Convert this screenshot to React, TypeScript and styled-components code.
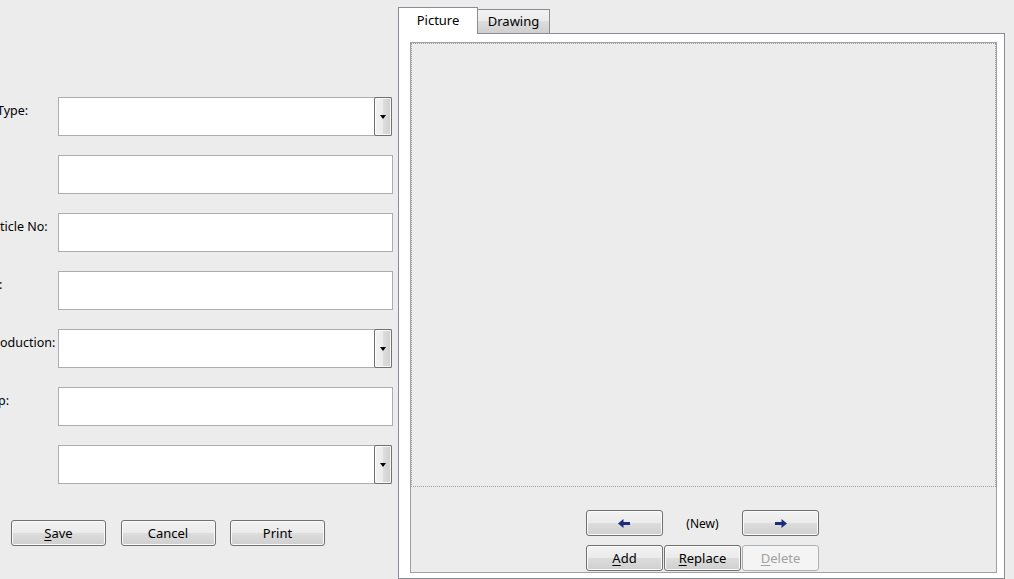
import React from 'react';
import styled, {createGlobalStyle} from 'styled-components';

const GlobalStyle = createGlobalStyle`
  html, body {
    margin: 0;
    padding: 0;
    background: #ececec;
  }
  body {
    font-family: "Noto Sans", "Open Sans", sans-serif;
    font-size: 13px;
    color: #000;
  }
`

type Field = {label?: string; indent?: number; combo?: boolean};

const fields: Field[] = [
    {label: 'Type:', indent: -3, combo: true},
    {},
    {label: 'ticle No:'},
    {label: ':', indent: -1},
    {label: 'oduction:', combo: true},
    {label: 'p:', indent: -2},
    {combo: true},
];

const LeftArrow = () => (
    <svg width="13" height="9" viewBox="0 0 13 9">
        <path d="M0 4.5 L5.5 0 V3 H12 V6 H5.5 V9 Z" fill="#1c2c7c"/>
    </svg>
);

const RightArrow = () => (
    <svg width="13" height="9" viewBox="0 0 13 9">
        <path d="M13 4.5 L7.5 0 V3 H1 V6 H7.5 V9 Z" fill="#1c2c7c"/>
    </svg>
);

const App = () => {
    return (
        <>
            <GlobalStyle/>
            <Window>
                <FormPane>
                    <Fields>
                        {fields.map((f, i) => (
                            <Row key={i}>
                                <Label $indent={f.indent ?? 0}>{f.label}</Label>
                                {f.combo ? (
                                    <Combo>
                                        <ComboText/>
                                        <DropButton>
                                            <DropArrow/>
                                        </DropButton>
                                    </Combo>
                                ) : (
                                    <TextBox/>
                                )}
                            </Row>
                        ))}
                    </Fields>
                    <ButtonRow>
                        <Button $width={95}><u>S</u>ave</Button>
                        <Button $width={95}>Cancel</Button>
                        <Button $width={95}>Print</Button>
                    </ButtonRow>
                </FormPane>

                <TabPane>
                    <TabStrip>
                        <Tab $active>Picture</Tab>
                        <Tab>Drawing</Tab>
                    </TabStrip>
                    <TabPage>
                        <Inner>
                            <PictureArea/>
                            <Controls>
                                <ControlGrid>
                                    <Button><LeftArrow/></Button>
                                    <NavLabel>(New)</NavLabel>
                                    <Button><RightArrow/></Button>
                                    <Button><u>A</u>dd</Button>
                                    <Button><u>R</u>eplace</Button>
                                    <Button $disabled><u>D</u>elete</Button>
                                </ControlGrid>
                            </Controls>
                        </Inner>
                    </TabPage>
                </TabPane>
            </Window>
        </>
    );
};

export default App;

const Window = styled.div`
  width: 1014px;
  height: 579px;
  display: flex;
  overflow: hidden;
  background: #ececec;
`

const FormPane = styled.div`
  width: 398px;
  flex: none;
  display: flex;
  flex-direction: column;
  padding-top: 97px;
  box-sizing: border-box;
`

const Fields = styled.div`
  display: flex;
  flex-direction: column;
  gap: 19px;
`

const Row = styled.div`
  display: flex;
  height: 39px;
`

const Label = styled.div<{ $indent: number }>`
  width: 58px;
  flex: none;
  overflow: hidden;
  white-space: nowrap;
  padding-top: 5px;
  line-height: 18px;
  font-size: 12.5px;
  text-indent: ${p => p.$indent}px;
`

const TextBox = styled.div`
  width: 335px;
  box-sizing: border-box;
  border: 1px solid #abadb3;
  background: #fff;
`

const Combo = styled.div`
  width: 334px;
  box-sizing: border-box;
  display: flex;
  border: 1px solid #abadb3;
  border-right: none;
  background: #fff;
`

const ComboText = styled.div`
  flex: 1;
`

const DropButton = styled.div`
  width: 18px;
  margin: -1px 0;
  box-sizing: border-box;
  border: 1px solid #707070;
  border-radius: 2px;
  background: linear-gradient(to right, #f2f2f2 0%, #ebebeb 50%, #dddddd 50%, #cfcfcf 100%);
  box-shadow: inset 0 0 0 1px #fafafa;
  display: flex;
  align-items: center;
  justify-content: center;
`

const DropArrow = styled.div`
  width: 0;
  height: 0;
  border-left: 3.5px solid transparent;
  border-right: 3.5px solid transparent;
  border-top: 4px solid #000;
`

const ButtonRow = styled.div`
  display: flex;
  gap: 14.5px;
  margin-top: 36px;
  padding-left: 11px;
`

const Button = styled.div<{ $width?: number; $disabled?: boolean }>`
  width: ${p => p.$width ? `${p.$width}px` : 'auto'};
  height: 26px;
  box-sizing: border-box;
  border: 1px solid ${p => p.$disabled ? '#adb2b5' : '#707070'};
  border-radius: 3px;
  background: ${p => p.$disabled
          ? '#f4f4f4'
          : 'linear-gradient(to bottom, #f2f2f2 0%, #ebebeb 50%, #dddddd 50%, #cfcfcf 100%)'};
  box-shadow: inset 0 0 0 1px ${p => p.$disabled ? '#f4f4f4' : '#fbfbfb'};
  color: ${p => p.$disabled ? '#a0a0a0' : '#000'};
  display: flex;
  align-items: center;
  justify-content: center;
  line-height: 18px;

  u {
    text-decoration-thickness: 1px;
    text-underline-offset: 2px;
  }
`

const TabPane = styled.div`
  display: flex;
  flex-direction: column;
  padding-top: 7px;
`

const TabStrip = styled.div`
  display: flex;
  align-items: flex-end;
  height: 26px;
`

const Tab = styled.div<{ $active?: boolean }>`
  position: relative;
  z-index: ${p => p.$active ? 2 : 1};
  width: ${p => p.$active ? 80 : 73}px;
  height: ${p => p.$active ? 27 : 24}px;
  margin-bottom: ${p => p.$active ? -1 : 0}px;
  margin-left: ${p => p.$active ? 0 : -1}px;
  box-sizing: border-box;
  border: 1px solid #898c95;
  border-bottom: none;
  background: ${p => p.$active ? '#fff' : 'linear-gradient(to bottom, #f2f2f2 0%, #ebebeb 50%, #dddddd 50%, #cfcfcf 100%)'};
  display: flex;
  justify-content: center;
  padding-top: ${p => p.$active ? 3 : 2}px;
  line-height: 18px;
`

const TabPage = styled.div`
  width: 607px;
  height: 546px;
  box-sizing: border-box;
  border: 1px solid #898c95;
  background: #fff;
  padding: 8px 7px 5px 11px;
  display: flex;
`

const Inner = styled.div`
  flex: 1;
  border: 1px solid #a0a0a0;
  background: #ececec;
  display: flex;
  flex-direction: column;
`

const PictureArea = styled.div`
  height: 444px;
  box-sizing: border-box;
  border: 1px dotted #a0a0a0;
`

const Controls = styled.div`
  padding: 23px 0 0 175px;
  display: flex;
`

const ControlGrid = styled.div`
  display: grid;
  grid-template-columns: repeat(3, 77px);
  grid-auto-rows: 26px;
  column-gap: 1px;
  row-gap: 9px;
`

const NavLabel = styled.div`
  display: flex;
  align-items: center;
  justify-content: center;
  font-size: 12px;
`
